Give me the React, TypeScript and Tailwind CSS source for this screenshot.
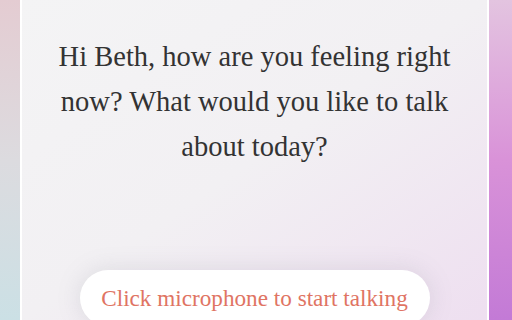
import React from "react";

export default function App() {
  return (
    <div className="w-[512px] h-[320px] overflow-hidden flex bg-white" style={{ fontFamily: '"Liberation Serif", serif' }}>
      <div className="w-[20px] h-full shrink-0 bg-gradient-to-b from-[#e4ccd2] via-[#dcdbdf] to-[#cbe0e5]" />
      <div className="w-[469px] h-full shrink-0 border-x-2 border-white bg-gradient-to-br from-[#f4f4f5] via-[#f2f0f3] to-[#eedff0] flex flex-col items-center">
        <p className="mt-[34px] whitespace-nowrap text-center text-[28.5px] leading-[45px] text-[#333333]">
          Hi Beth, how are you feeling right
          <br />
          now? What would you like to talk
          <br />
          about today?
        </p>
        <div className="mt-auto mb-[-6px] w-[350px] h-[56px] rounded-full bg-white shadow-[0_0_24px_rgba(120,120,140,0.18)] flex items-center justify-center">
          <span className="text-[23.2px] text-[#e07463]">Click microphone to start talking</span>
        </div>
      </div>
      <div className="flex-1 h-full bg-gradient-to-b from-[#e3c4e0] via-[#d992d8] to-[#c37ad6]" />
    </div>
  );
}
